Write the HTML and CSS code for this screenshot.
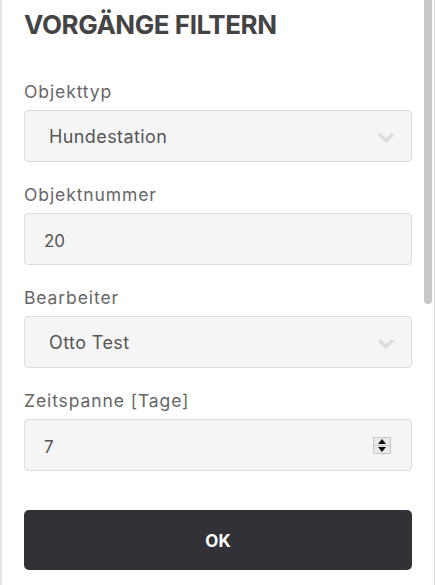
FILE: index.html
```html
<!DOCTYPE html>
<html lang="de">
<head>
<meta charset="utf-8">
<title>Vorgänge filtern</title>
<link rel="stylesheet" href="styles.css">
</head>
<body>
<div class="panel">
  <h1 class="title">VORGÄNGE FILTERN</h1>
  <form class="form">
    <div class="group">
      <label class="label">Objekttyp</label>
      <div class="field select">
        <span class="value">Hundestation</span>
        <svg class="chevron" width="18" height="11" viewBox="0 0 18 11"><path d="M2 2 L9 8.5 L16 2" fill="none" stroke="#dcdcdc" stroke-width="3.6"/></svg>
      </div>
    </div>
    <div class="group">
      <label class="label">Objektnummer</label>
      <div class="field input"><span class="value">20</span></div>
    </div>
    <div class="group">
      <label class="label">Bearbeiter</label>
      <div class="field select">
        <span class="value">Otto Test</span>
        <svg class="chevron" width="18" height="11" viewBox="0 0 18 11"><path d="M2 2 L9 8.5 L16 2" fill="none" stroke="#dcdcdc" stroke-width="3.6"/></svg>
      </div>
    </div>
    <div class="group">
      <label class="label">Zeitspanne [Tage]</label>
      <div class="field input">
        <span class="value">7</span>
        <span class="spinner">
          <span class="spin up"><svg width="8" height="5" viewBox="0 0 8 5"><path d="M0 5 L4 0 L8 5 Z" fill="#111"/></svg></span>
          <span class="spin down"><svg width="8" height="5" viewBox="0 0 8 5"><path d="M0 0 L4 5 L8 0 Z" fill="#111"/></svg></span>
        </span>
      </div>
    </div>
    <button type="button" class="ok">OK</button>
  </form>
  <div class="scroll-thumb"></div>
</div>
</body>
</html>
```

FILE: styles.css
```css
* { box-sizing: border-box; }
html, body { margin: 0; padding: 0; background: #fff; }
body { font-family: "Inter", "DejaVu Sans", sans-serif; }
.panel {
  position: relative;
  width: 435px;
  height: 585px;
  border-left: 2px solid #e4e4e4;
  border-right: 1px solid #dedede;
  padding: 0 22px;
  overflow: hidden;
}
.title {
  margin: 0;
  padding-top: 9px;
  height: 80px;
  font-size: 26px;
  line-height: 32px;
  font-weight: 700;
  color: #444;
  letter-spacing: -0.45px;
}
.form { width: 388px; }
.group { margin-bottom: 21px; }
.label {
  display: block;
  font-size: 17.5px;
  line-height: 24px;
  color: #666;
  letter-spacing: 0.9px;
  margin-bottom: 6px;
}
.field {
  position: relative;
  height: 52px;
  background: #f5f5f5;
  border: 1px solid #dedede;
  border-radius: 4px;
  display: flex;
  align-items: center;
  color: #555;
}
.select { padding-left: 24px; font-size: 18px; letter-spacing: 0.4px; }
.input { padding-left: 19px; font-size: 17px; padding-top: 3px; }
.chevron { position: absolute; right: 16px; top: 21px; }
.spinner {
  position: absolute;
  right: 20px;
  top: 17px;
  width: 18px;
  height: 17px;
  display: flex;
  flex-direction: column;
  border: 1px solid #c9c9c9;
  background: #e9e9e9;
}
.spin { flex: 1; display: flex; align-items: center; justify-content: center; }
.spin.up { border-bottom: 1px solid #c9c9c9; }
.ok {
  display: block;
  width: 388px;
  height: 60px;
  margin-top: 39px;
  padding-top: 3px;
  border: 0;
  border-radius: 5px;
  background: #323137;
  color: #fff;
  font-family: inherit;
  font-size: 17px;
  font-weight: 700;
}
.scroll-thumb {
  position: absolute;
  top: 0;
  right: 2px;
  width: 8px;
  height: 304px;
  background: #c8c8c8;
  border-radius: 0 0 4px 4px;
}
```
